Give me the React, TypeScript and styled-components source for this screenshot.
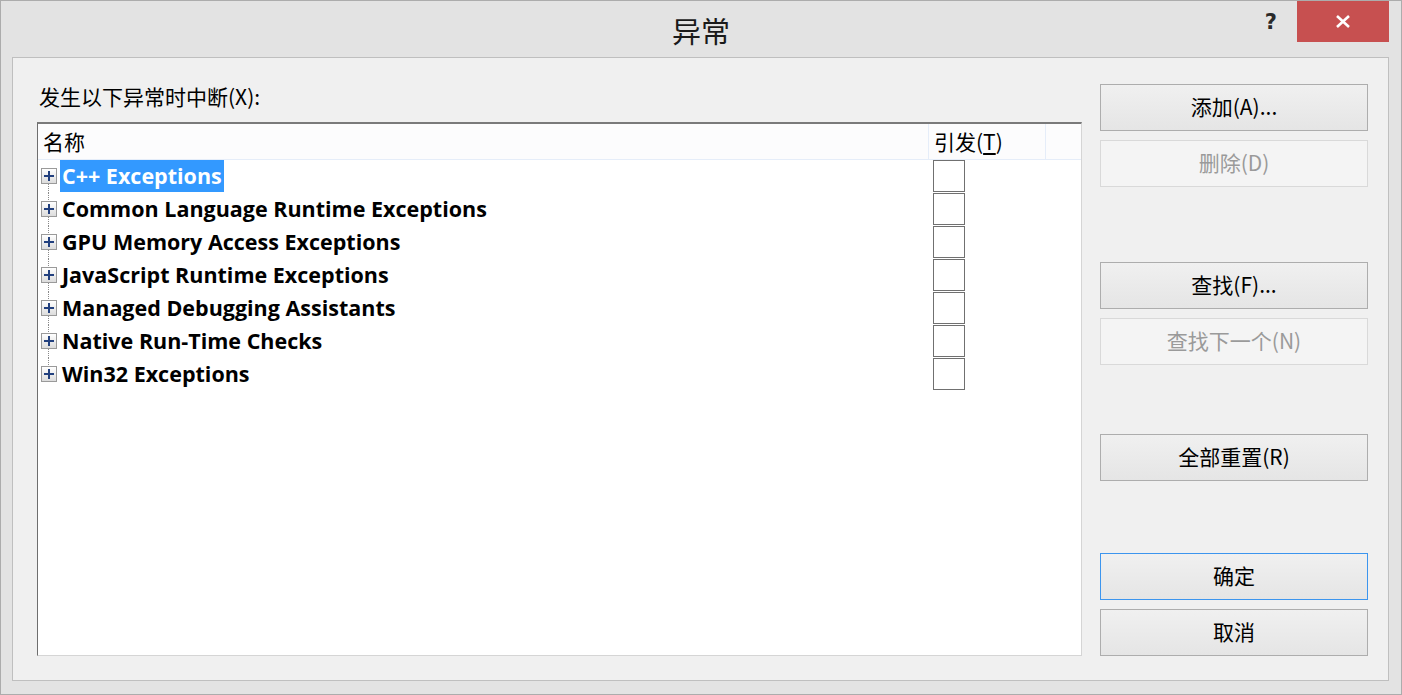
import React from "react";
import styled, { createGlobalStyle } from "styled-components";

const Global = createGlobalStyle`
  html, body { margin: 0; padding: 0; }
  body {
    font-family: "Noto Sans", "Noto Sans CJK SC", sans-serif;
    background: #e3e3e3;
  }
  #root { width: 1402px; height: 695px; }
`;

const Window = styled.div`
  box-sizing: border-box;
  width: 1402px;
  height: 695px;
  border: 1px solid #acacac;
  background: #e3e3e3;
  display: flex;
  flex-direction: column;
`;

const TitleBar = styled.div`
  height: 56px;
  display: grid;
  grid-template-columns: 1fr auto 1fr;
  align-items: start;
`;

const Title = styled.div`
  grid-column: 2;
  font-family: "Noto Sans CJK SC", sans-serif;
  font-size: 29px;
  line-height: 58px;
  color: #1a1a1a;
`;

const Controls = styled.div`
  grid-column: 3;
  justify-self: end;
  display: flex;
  align-items: flex-start;
  margin-right: 12px;
`;

const HelpButton = styled.div`
  font-family: "DejaVu Sans", sans-serif;
  font-weight: bold;
  font-size: 21px;
  line-height: 42px;
  color: #2a2a2a;
  margin-right: 20px;
`;

const CloseButton = styled.div`
  width: 92px;
  height: 41px;
  background: #c75050;
  display: flex;
  align-items: center;
  justify-content: center;
`;

const Panel = styled.div`
  flex: 1;
  margin: 0 12px 13px 11px;
  border: 1px solid #bfbfbf;
  background: #f0f0f0;
  display: flex;
  gap: 18px;
  padding: 26px 20px 24px 24px;
`;

const LeftColumn = styled.div`
  flex: 1;
  display: flex;
  flex-direction: column;
`;

const Label = styled.div`
  font-size: 21px;
  line-height: 24px;
  height: 24px;
  margin-bottom: 14px;
  color: #000;
  padding-left: 2px;
  font-family: "Noto Sans CJK SC", sans-serif;
`;

const ListBox = styled.div`
  flex: 1;
  border-style: solid;
  border-width: 2px 1px 1px 1px;
  border-color: #7a7a7a #d5d5d5 #d5d5d5 #6e6e6e;
  background: #fff;
  display: flex;
  flex-direction: column;
`;

const Header = styled.div`
  height: 35px;
  display: flex;
  background: #fcfcfd;
  border-bottom: 1px solid #e5edf9;
`;

const HeaderCell = styled.div<{ $w?: number }>`
  ${(p) => (p.$w ? `width: ${p.$w}px;` : "flex: 1;")}
  box-sizing: border-box;
  border-right: 1px solid #e5edf9;
  font-family: "Noto Sans CJK SC", sans-serif;
  font-size: 21px;
  line-height: 35px;
  padding-left: 5px;
  color: #000;
  &:last-child { border-right: none; }
`;

const Underline = styled.span`
  text-decoration: underline;
  text-underline-offset: 3px;
`;

const Rows = styled.div`
  display: flex;
  flex-direction: column;
`;

const Row = styled.div`
  height: 33px;
  display: flex;
`;

const NameCell = styled.div`
  width: 891px;
  display: flex;
  align-items: stretch;
  padding-left: 3px;
  box-sizing: border-box;
`;

const TreeCell = styled.div<{ $first?: boolean; $last?: boolean }>`
  position: relative;
  width: 19px;
  display: flex;
  align-items: center;
  &::before {
    content: "";
    position: absolute;
    left: 7px;
    top: ${(p) => (p.$first ? "24px" : "0")};
    bottom: ${(p) => (p.$last ? "24px" : "0")};
    border-left: 1px dotted #8a8a8a;
  }
`;

const Expander = styled.div`
  position: relative;
  z-index: 1;
  box-sizing: border-box;
  width: 16px;
  height: 16px;
  margin-top: -1px;
  border: 1px solid #9a9a9a;
  background: linear-gradient(#ffffff, #dcdcdc);
  display: flex;
  align-items: center;
  justify-content: center;
`;

const NameText = styled.div<{ $selected?: boolean }>`
  height: 32px;
  padding: 0 2px;
  font-family: "Open Sans", "Noto Sans", sans-serif;
  font-weight: 700;
  font-size: 21.5px;
  line-height: 31px;
  white-space: nowrap;
  color: ${(p) => (p.$selected ? "#fff" : "#000")};
  background: ${(p) => (p.$selected ? "#3399ff" : "transparent")};
`;

const TriggerCell = styled.div`
  width: 117px;
  padding-left: 4px;
`;

const CheckBox = styled.div`
  box-sizing: border-box;
  width: 32px;
  height: 32px;
  border: 1px solid #707070;
  background: #fff;
`;

const ButtonColumn = styled.div`
  width: 268px;
  display: flex;
  flex-direction: column;
`;

const Button = styled.div<{ $disabled?: boolean; $default?: boolean; $space?: number }>`
  box-sizing: border-box;
  height: 47px;
  padding-bottom: 3px;
  margin-top: ${(p) => p.$space ?? 0}px;
  border: 1px solid
    ${(p) => (p.$default ? "#3c95ee" : p.$disabled ? "#d9d9d9" : "#adadad")};
  background: ${(p) =>
    p.$disabled ? "#f4f4f4" : "linear-gradient(#f0f0f0, #e5e5e5)"};
  color: ${(p) => (p.$disabled ? "#9a9a9a" : "#000")};
  font-family: "Noto Sans CJK SC", sans-serif;
  font-size: 21px;
  display: flex;
  align-items: center;
  justify-content: center;
`;

const items = [
  "C++ Exceptions",
  "Common Language Runtime Exceptions",
  "GPU Memory Access Exceptions",
  "JavaScript Runtime Exceptions",
  "Managed Debugging Assistants",
  "Native Run-Time Checks",
  "Win32 Exceptions",
];

const PlusIcon = () => (
  <svg width="10" height="10" viewBox="0 0 10 10">
    <rect x="0" y="4" width="10" height="2" fill="#22407e" />
    <rect x="4" y="0" width="2" height="10" fill="#22407e" />
  </svg>
);

const CloseIcon = () => (
  <svg width="14" height="13" viewBox="0 0 14 13">
    <path d="M1 1 L13 12 M13 1 L1 12" stroke="#fff" strokeWidth="2.6" />
  </svg>
);

export default function App() {
  return (
    <>
      <Global />
      <Window>
        <TitleBar>
          <Title>异常</Title>
          <Controls>
            <HelpButton>?</HelpButton>
            <CloseButton>
              <CloseIcon />
            </CloseButton>
          </Controls>
        </TitleBar>
        <Panel>
          <LeftColumn>
            <Label>发生以下异常时中断(X):</Label>
            <ListBox>
              <Header>
                <HeaderCell $w={891}>名称</HeaderCell>
                <HeaderCell $w={117}>
                  引发(<Underline>T</Underline>)
                </HeaderCell>
                <HeaderCell />
              </Header>
              <Rows>
                {items.map((name, i) => (
                  <Row key={name}>
                    <NameCell>
                      <TreeCell $first={i === 0} $last={i === items.length - 1}>
                        <Expander>
                          <PlusIcon />
                        </Expander>
                      </TreeCell>
                      <NameText $selected={i === 0}>{name}</NameText>
                    </NameCell>
                    <TriggerCell>
                      <CheckBox />
                    </TriggerCell>
                  </Row>
                ))}
              </Rows>
            </ListBox>
          </LeftColumn>
          <ButtonColumn>
            <Button>添加(A)...</Button>
            <Button $disabled $space={9}>删除(D)</Button>
            <Button $space={75}>查找(F)...</Button>
            <Button $disabled $space={9}>查找下一个(N)</Button>
            <Button $space={69}>全部重置(R)</Button>
            <Button $default $space={72}>确定</Button>
            <Button $space={9}>取消</Button>
          </ButtonColumn>
        </Panel>
      </Window>
    </>
  );
}
